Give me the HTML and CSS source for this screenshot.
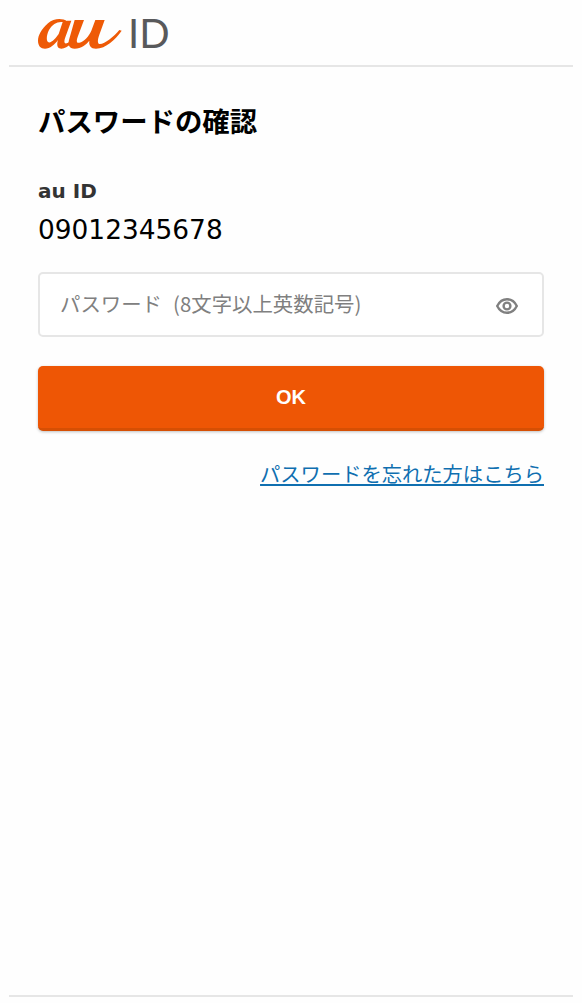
FILE: index.html
```html
<!DOCTYPE html>
<html lang="ja">
<head>
    <meta charset="UTF-8">
    <meta name="viewport" content="width=device-width, initial-scale=1.0">
    <title>パスワードの確認</title>
    <link rel="stylesheet" href="styles.css">
</head>
<body>

    <!-- Logo bar -->
    <header class="site-header">
        <div class="logo">
            <svg class="logo-au" viewBox="12 15 252 90" width="84" height="30" aria-label="au">
                <path class="logo-mark" fill-rule="evenodd" d="M100 22C85 12 60 12 42 28C22 45 12 65 12 80C12 95 20 104 33 104C48 104 62 92 72 78C68 90 68 104 82 104C92 104 102 98 110 90L106 84C100 88 94 90 92 86C90 82 92 76 94 70L112 20L96 20ZM86 24C70 22 55 30 45 48C38 62 36 78 42 84C50 90 66 72 74 60Z"/>
                <path class="logo-mark" d="M122 18L150 18L132 66C126 82 128 88 136 86C150 84 165 66 172 50L184 18L212 18L196 62C190 78 190 90 198 90C212 90 240 68 256 48L263 50C245 76 215 104 186 104C170 104 164 94 166 80C156 92 142 104 122 104C106 104 100 92 106 74Z"/>
            </svg>
            <span class="logo-id">ID</span>
        </div>
    </header>

    <main class="content">
        <h1>パスワードの確認</h1>

        <div class="account">
            <div class="account-label">au ID</div>
            <div class="account-number">09012345678</div>
        </div>

        <!-- Password field -->
        <div class="password-field">
            <input type="password" placeholder="パスワード&nbsp; (8文字以上英数記号)">
            <svg class="eye" viewBox="0 0 22 16" width="22" height="16">
                <path d="M1.200 8C3.200 4 6.800 1.200 11 1.200S18.800 4 20.800 8C18.800 12 15.200 14.800 11 14.800S3.200 12 1.200 8Z"/>
                <circle cx="11" cy="8" r="3.400"/>
            </svg>
        </div>

        <button class="ok-button">OK</button>

        <div class="forgot">
            <a href="#">パスワードを忘れた方はこちら</a>
        </div>
    </main>

    <footer class="site-footer"></footer>

</body>
</html>
```

FILE: styles.css
```css
body {
    margin: 0;
    box-sizing: border-box;
    height: 1003px;
    padding: 0 9px;
    display: flex;
    flex-direction: column;
    background-color: #fefefe;
    font-family: "Noto Sans CJK JP", "Noto Sans", sans-serif;
    color: #000;
    overflow: hidden;
}
.site-header {
    flex: none;
    height: 67px;
    box-sizing: border-box;
    padding: 19px 0 0 29px;
    border-bottom: 2px solid #e6e6e6;
}
.logo {
    display: flex;
    align-items: flex-start;
}
.logo-mark {
    fill: #ee5a06;
}
.logo-id {
    margin-left: 6px;
    font-family: "Lato", sans-serif;
    font-weight: 400;
    font-size: 40px;
    line-height: 28px;
    color: #58595b;
}
.content {
    flex: 1;
    padding: 0 29px;
}
h1 {
    margin: 35px 0 0;
    font-size: 27.4px;
    line-height: 36px;
    font-weight: 700;
}
.account {
    margin-top: 39px;
}
.account-label {
    font-family: "DejaVu Sans", sans-serif;
    font-weight: 700;
    font-size: 20px;
    line-height: 28px;
    color: #333;
}
.account-number {
    margin-top: 7px;
    font-family: "DejaVu Sans", sans-serif;
    font-size: 26.4px;
    line-height: 36px;
}
.password-field {
    position: relative;
    margin-top: 24px;
}
.password-field input {
    display: block;
    width: 100%;
    height: 65px;
    box-sizing: border-box;
    padding: 0 60px 4px 20px;
    border: 2px solid #e6e6e6;
    border-radius: 5px;
    background: #fff;
    font-family: inherit;
    font-size: 20.4px;
    word-spacing: 1px;
    outline: none;
}
.password-field input::placeholder {
    color: #808080;
    opacity: 1;
}
.eye {
    position: absolute;
    right: 26px;
    top: 26px;
    fill: none;
    stroke: #808080;
    stroke-width: 2.4;
}
.ok-button {
    display: block;
    width: 100%;
    height: 65px;
    margin-top: 29px;
    border: none;
    border-bottom: 3px solid #d64f04;
    border-radius: 5px;
    background-color: #ee5605;
    box-shadow: 0 1px 3px rgba(0, 0, 0, 0.25);
    color: #fff;
    font-family: "Liberation Sans", Arial, sans-serif;
    font-weight: 700;
    font-size: 20px;
    cursor: pointer;
}
.forgot {
    margin-top: 27px;
    text-align: right;
}
.forgot a {
    color: #0f6fb0;
    font-size: 20.3px;
    line-height: 30px;
}
.site-footer {
    flex: none;
    height: 6px;
    border-top: 2px solid #e6e6e6;
}
```
